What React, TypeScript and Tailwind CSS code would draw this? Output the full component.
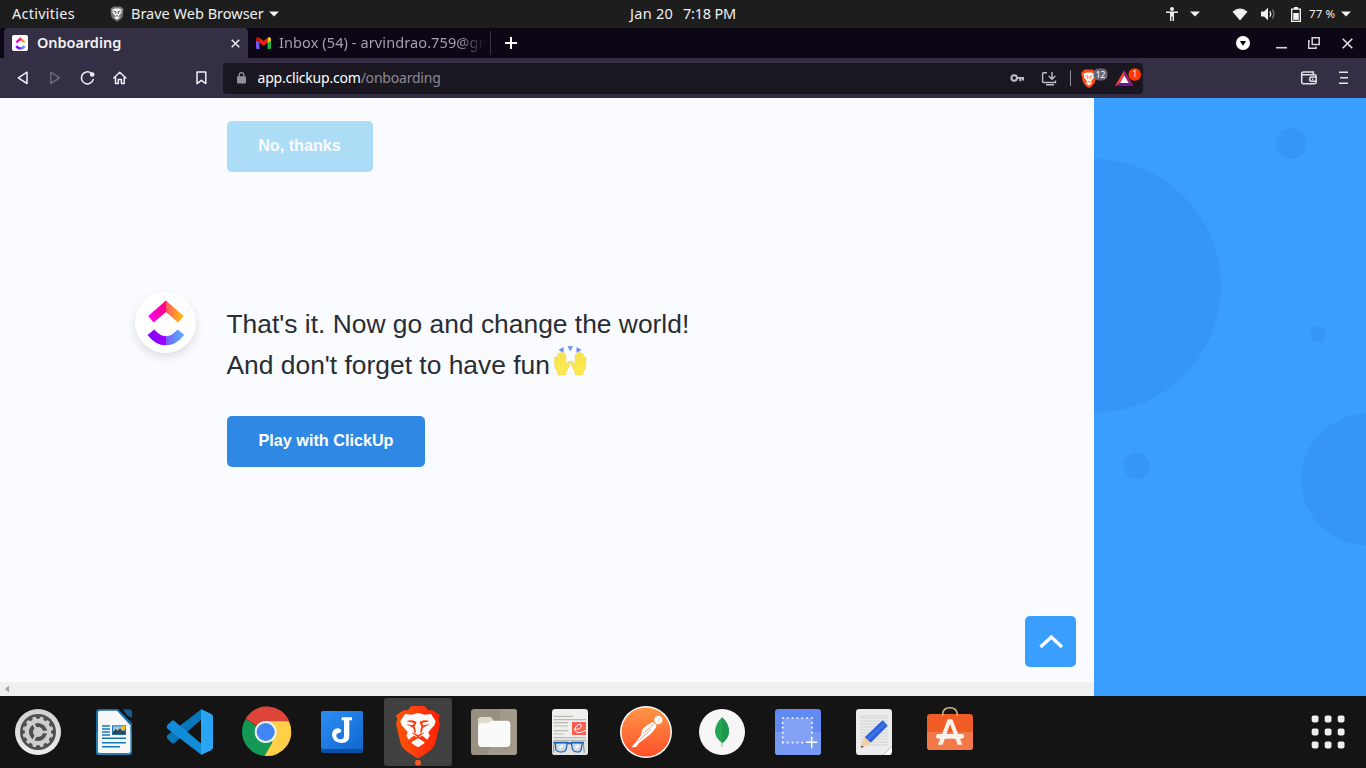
import React from "react";

const Caret = () => (
  <svg width="10" height="6" viewBox="0 0 10 6" className="shrink-0"><path d="M0 0.5H10L5 5.5Z" fill="#f2f2f2" /></svg>
);

function TopBar() {
  return (
    <div className="flex h-7 items-center bg-[#1d1d1d] text-[14.5px] text-[#f0f0f0]">
      <div className="w-[98px] shrink-0 pb-px pl-3 tracking-[0.25px] whitespace-nowrap">Activities</div>
      <div className="flex w-[532px] shrink-0 items-center pl-3">
        <svg width="14" height="16" viewBox="0 0 14 16" className="mr-[7px] shrink-0">
          <path d="M3.6 0.5H10.4L13.6 3L12.7 10.5Q11.5 13.5 7 15.8Q2.5 13.5 1.3 10.5L0.4 3Z" fill="#777" />
          <path d="M2.3 3.5L5 2.5H9L11.7 3.5L11.2 7L9 9.5L9.5 12L7 13.5L4.5 12L5 9.5L2.8 7Z" fill="#f4f4f4" />
          <path d="M3.5 5L6 5.8L5.6 8M10.5 5L8 5.8L8.4 8M5.4 10.5L7 9.5L8.6 10.5" stroke="#555" strokeWidth="1" fill="none" />
        </svg>
        <span className="w-[138px] pb-px whitespace-nowrap">Brave Web Browser</span>
        <Caret />
      </div>
      <div className="flex w-[536px] shrink-0 gap-[8px] pb-px whitespace-nowrap"><span className="w-[45px] tracking-[0.3px]">Jan 20</span><span className="tracking-[-0.2px]">7:18 PM</span></div>
      <svg width="12" height="14" viewBox="0 0 12 14" className="shrink-0"><circle cx="6" cy="2" r="2" fill="#eee" /><path d="M0 4.5H12V6H8V14H6.6V9.5H5.4V14H4V6H0Z" fill="#eee" /></svg>
      <div className="w-3" />
      <Caret />
      <div className="w-8" />
      <svg width="16" height="13" viewBox="0 0 16 13" className="shrink-0"><path d="M0.5 3.7Q8-2.5 15.5 3.7L8 12.5Z" fill="#f2f2f2" /></svg>
      <svg width="15" height="14" viewBox="0 0 15 14" className="ml-[13px] shrink-0"><path d="M0 4.5H3L7 0.8V13.2L3 9.5H0Z" fill="#f2f2f2" /><path d="M8.7 4.3Q10.7 7 8.7 9.7" fill="none" stroke="#f2f2f2" strokeWidth="1.3" /><path d="M11 2.5Q15 7 11 11.5" fill="none" stroke="#777" strokeWidth="1.2" /></svg>
      <svg width="10" height="15" viewBox="0 0 10 15" className="ml-[15px] shrink-0"><path d="M3 0H7V1.5H10V15H0V1.5H3Z" fill="#f2f2f2" /><path d="M1.3 2.8H8.7V13.7H1.3Z" fill="#1d1d1d" /><path d="M2.2 6H7.8V12.8H2.2Z" fill="#f2f2f2" /></svg>
      <span className="ml-2 w-[32px] shrink-0 text-[11.5px] tracking-[0.15px] whitespace-nowrap">77 %</span>
      <Caret />
    </div>
  );
}

function ClickUpMark({ className, id }: { className: string; id: string }) {
  return (
    <svg viewBox="0 0 38 46" className={className}>
      <defs>
        <linearGradient id={id + "t"}><stop stopColor="#f0f" /><stop offset=".48" stopColor="#ff0083" /><stop offset=".52" stopColor="#ff5b60" /><stop offset="1" stopColor="#ffc800" /></linearGradient>
        <linearGradient id={id + "b"}><stop stopColor="#8700ff" /><stop offset=".49" stopColor="#9b00ff" /><stop offset=".51" stopColor="#7660fb" /><stop offset="1" stopColor="#53b4ff" /></linearGradient>
      </defs>
      <path d="M1.2 16L18.9 0.5L36.7 16L31.3 22.5L18.9 12L6.7 22.5Z" fill={`url(#${id}t)`} />
      <path d="M0.5 35L7.3 29.5Q18.9 43 30.6 29.5L37.3 35Q29 45.3 18.9 45.3Q8.5 45.3 0.5 35Z" fill={`url(#${id}b)`} />
    </svg>
  );
}

function TabStrip() {
  return (
    <div className="flex h-[30px] items-center bg-[#0d0715] pl-1 text-[#f3f2f5]">
      <div className="flex h-full w-[244px] shrink-0 items-center rounded-t-[4px] bg-[#342f44] pl-2">
        <span className="flex size-4 items-center justify-center rounded-[2px] bg-white"><ClickUpMark className="h-[13px] w-[11px]" id="fav" /></span>
        <span className="ml-[9px] w-[194px] pb-px text-[14.5px] font-semibold tracking-[-0.05px]">Onboarding</span>
        <svg width="9" height="9" viewBox="0 0 9 9"><path d="M0.7 0.7L8.3 8.3M8.3 0.7L0.7 8.3" stroke="#eee" strokeWidth="1.5" /></svg>
      </div>
      <svg width="15" height="12" viewBox="0 0 15 12" className="ml-2 shrink-0">
        <path d="M0 2L3.4 4.5V12H1Q0 12 0 11Z" fill="#7657f5" />
        <path d="M11.6 4.5L15 2V11Q15 12 14 12H11.6Z" fill="#19b84b" />
        <path d="M0 1.7Q1.3-0.8 3.2 0.8L7.5 4L11.6 0.9V5.2L7.5 8.7L3.4 5.5L0 3.5Z" fill="#f32212" />
        <path d="M0 1.7Q1.3-0.8 3.4 0.9V5.5L0 3.5Z" fill="#b3120c" />
        <path d="M11.6 0.9Q14-1 15 1.7V3.5L11.6 6Z" fill="#ffc40e" />
      </svg>
      <span className="ml-2 w-[211px] shrink-0 bg-linear-to-r from-[#aaa6b0] from-85% to-[#0d0715] to-98% bg-clip-text pb-px text-[14.5px] tracking-[0.1px] whitespace-nowrap text-transparent">Inbox (54) - arvindrao.759@gm</span>
      <div className="h-6 w-px bg-[#3a3641]" />
      <svg width="12" height="12" viewBox="0 0 12 12" className="ml-[14px] shrink-0"><path d="M6 0V12M0 6H12" stroke="#fff" strokeWidth="2" /></svg>
      <svg width="14" height="14" viewBox="0 0 14 14" className="ml-[719px] shrink-0"><circle cx="7" cy="7" r="7" fill="#fff" /><path d="M3.8 5H10.2L7 9.8Z" fill="#0d0715" /></svg>
      <svg width="11" height="12" viewBox="0 0 11 12" className="ml-[26px] shrink-0"><path d="M0 10.7H11" stroke="#d7d5da" strokeWidth="1.6" /></svg>
      <svg width="12" height="12" viewBox="0 0 12 12" className="ml-[21px] shrink-0"><path d="M4.2 0.8H11.2V7.5H4.2ZM2 4H0.7V11.2H8V9.5" fill="none" stroke="#d7d5da" strokeWidth="1.5" /></svg>
      <svg width="11" height="11" viewBox="0 0 11 11" className="ml-[22px] shrink-0"><path d="M0.7 0.7L10.3 10.3M10.3 0.7L0.7 10.3" stroke="#e7e5e9" strokeWidth="1.5" /></svg>
    </div>
  );
}

function Toolbar() {
  return (
    <div className="flex h-10 items-center bg-[#342f44]">
      <svg width="223" height="40" viewBox="0 0 223 40" className="shrink-0" fill="none" stroke="#f1eff4" strokeWidth="1.5" strokeLinejoin="round" strokeLinecap="round">
        <path d="M27 14.2V25.5L18.3 19.8Z" />
        <path d="M50.8 14.2V25.5L59.5 19.8Z" stroke="#6e697b" />
        <path d="M91.2 15.2A6 6 0 1 0 93.2 21.5" /><circle cx="92.2" cy="16.5" r="1.6" fill="#f1eff4" />
        <path d="M113.8 20L119.8 14.3L125.8 20M115.5 19V25.5H118.3V21.5H121.4V25.5H124.2V19" />
        <path d="M197 14H205.8V25.6L201.4 22.3L197 25.6Z" />
      </svg>
      <div className="flex h-[31px] w-[920px] shrink-0 items-center rounded-[4px] bg-[#1a1720]">
        <svg width="9" height="12" viewBox="0 0 9 12" className="ml-[14px] shrink-0"><path d="M2.2 5V3A2.3 2.3 0 0 1 6.8 3V5" fill="none" stroke="#92919a" strokeWidth="1.3" /><rect y="4.2" width="9" height="7.3" rx="1" fill="#92919a" /></svg>
        <div className="ml-[11.5px] w-[751.5px] shrink-0 pb-0.5 text-[14px] tracking-[-0.21px] whitespace-nowrap text-white">app.clickup.com<span className="text-[#8c8a92]">/onboarding</span></div>
        <svg width="134" height="31" viewBox="0 0 134 31" className="shrink-0 font-['Noto_Sans',sans-serif]">
          <g fill="none" stroke="#bebcc2" strokeWidth="2"><circle cx="5.2" cy="15" r="2.8" /><path d="M8 15H15M11.3 15V18.3M14 15V17.5" /></g>
          <g fill="none" stroke="#bebcc2" strokeWidth="1.4"><path d="M38 9.8H34.5Q33.6 9.8 33.6 11V18.5Q33.6 19.5 34.5 19.5H46.5V17.5M37 21.8H45M43 9V16M39.7 13L43 16.3L46.3 13" /></g>
          <path d="M61.5 7.5V23" stroke="#928f99" />
          <path d="M75.5 6.5H83.5L88 10L86.3 18Q85 22.5 80 25Q75 22.5 73.7 18L72 10Z" fill="#fb4a13" />
          <path d="M74.5 10.5L78 9.5H82L85.5 10.5L84.7 15L82.2 18L82.8 20.5L80 22.5L77.2 20.5L77.8 18L75.3 15Z" fill="#fff" />
          <path d="M76.5 12.7L79 13.3L78.7 16M83.5 12.7L81 13.3L81.3 16M78.3 19.5L80 18.5L81.7 19.5" fill="none" stroke="#fb4a13" strokeWidth="0.8" />
          <rect x="84.5" y="5.5" width="14" height="12" rx="5" fill="#686477" /><text x="91.5" y="14.5" textAnchor="middle" fill="#fff" fontSize="8.5">12</text>
          <path d="M115.3 7.5L106 23H124.5Z" fill="#6e1898" /><path d="M115.3 7.5L106 23L110.5 20L115.3 12Z" fill="#ff4724" /><path d="M115.3 7.5L124.5 23L120.2 20L115.3 12Z" fill="#9e1f63" /><path d="M115.3 12.5L111 20H119.7Z" fill="#fff" />
          <rect x="119.5" y="5.2" width="12.5" height="12.5" rx="6" fill="#ff3b00" /><text x="125.8" y="14.2" textAnchor="middle" fill="#fff" fontSize="8">1</text>
        </svg>
      </div>
      <svg width="223" height="40" viewBox="0 0 223 40" className="shrink-0" fill="none" stroke="#e3e1e7" strokeWidth="1.5">
        <path d="M160 25.7H171.5Q173.2 25.7 173.2 24V18.2Q173.2 16.7 171.5 16.7H160Q158.7 16.7 158.7 15.3Q158.7 14 160.5 14H170.3V16.7M158.7 15.3V24Q158.7 25.7 160 25.7M173.2 19H168.7Q166.7 19 166.7 21.2Q166.7 23.3 168.7 23.3H173.2M169 21.2H170.2" />
        <path d="M196 14.2H205M197 19.7H205M196 25.2H205" />
      </svg>
    </div>
  );
}

function RaisedHands() {
  return (
    <svg width="36" height="32" viewBox="0 0 36 32" className="shrink-0">
      <path d="M10.5 2V8L5.5 5ZM14.5 1.2H20L17.3 6.2ZM23.5 2V8L28.5 5Z" fill="#6890fa" />
      <g fill="#fce94f" stroke="#e9cd44" strokeWidth="0.5" transform="translate(0.5 0)">
        <path d="M1 13.5Q1 11.8 2.3 11.8Q3.5 11.8 3.6 14L4 10Q4 8.3 5.3 8.3Q6.8 8.3 6.8 10V8.5Q7 7 8.2 7Q9.5 7 9.6 8.5V10Q9.8 8.8 11 8.8Q12.3 8.8 12.3 10.5V20L14.5 16.8Q16 15.5 16.8 16.7Q17.2 17.4 16 20L12.8 26.5Q12.3 28 12.3 30H4.3Q4.5 27 2.5 24Q1 21 1 17Z" />
        <path d="M32.5 13.5Q32.5 11.8 31.2 11.8Q30.2 11.8 30.1 14L29.8 10Q29.8 8.3 28.5 8.3Q27.1 8.3 27.1 10V8.5Q27 7 25.8 7Q24.5 7 24.4 8.5V10Q24.2 8.8 23 8.8Q21.7 8.8 21.7 10.5V20L19.5 16.8Q18 15.5 17.2 16.7Q16.8 17.4 18 20L21.2 26.5Q21.7 28 21.7 30H29.4Q29.3 27 31.2 24Q32.5 21 32.5 17Z" />
        <path d="M3.6 14V18M6.8 10V17M9.6 10V17M30.1 14V18M27.1 10V17M24.4 10V17" />
      </g>
    </svg>
  );
}

function Page() {
  return (
    <div className="flex h-[598px] font-['Liberation_Sans',sans-serif]">
      <main className="flex w-[1094px] shrink-0 flex-col bg-[#fafbfe]">
        <div className="flex h-[518px] pt-[23px] pl-[135px]">
          <div className="w-[92px] shrink-0 pt-[171px]">
            <div className="flex size-[61px] items-center justify-center rounded-full bg-white shadow-[0_4px_10px_rgba(0,0,0,0.12)]"><ClickUpMark className="h-[46px] w-[38px]" id="logo" /></div>
          </div>
          <div>
            <button className="flex h-[51px] w-[146px] items-center justify-center rounded-[5px] bg-[#addcf6] pr-px pb-[3px] text-[16.2px] font-bold whitespace-nowrap text-[#f9fbfe]">No, thanks</button>
            <div className="mt-[132px] text-[26.4px] leading-[41px] whitespace-nowrap text-[#292d34]">
              <p className="-ml-[0.5px]">That's it. Now go and change the world!</p>
              <div className="-ml-[0.5px] flex h-[41px] items-start"><span className="mr-[3px]">And don't forget to have fun</span><RaisedHands /></div>
            </div>
            <button className="mt-[30px] flex h-[51px] w-[198px] items-center justify-center rounded-[5px] bg-[#3088e5] pb-[3px] text-[16.2px] font-bold whitespace-nowrap text-white">Play with ClickUp</button>
          </div>
        </div>
        <div className="flex h-[66px] justify-end pr-[18px]">
          <button className="flex size-[51px] items-center justify-center rounded-[5px] bg-[#3a9eff]"><svg width="26" height="16" viewBox="0 0 26 16"><path d="M2.5 13L13.3 3L24 13" fill="none" stroke="#fff" strokeWidth="3.4" /></svg></button>
        </div>
        <div className="flex h-[14px] items-center bg-[#f0f0f0] pl-[5px]"><svg width="4" height="8" viewBox="0 0 4 8"><path d="M4 0.5V7.5L0 4Z" fill="#a3a3a3" /></svg></div>
      </main>
      <aside className="w-[272px] bg-[#3a9eff]">
        <svg width="272" height="598" viewBox="0 0 272 598" fill="#3695f9"><circle cx="0" cy="188" r="127" /><circle cx="197" cy="45.5" r="15.5" /><circle cx="224.5" cy="236" r="8" /><circle cx="42.5" cy="368" r="13" /><circle cx="272.5" cy="381.5" r="65.5" /></svg>
      </aside>
    </div>
  );
}

const teeth = Array.from({ length: 12 }, (_, i) => i * 30);
const rows = [60, 66, 75, 84, 93, 102, 111, 120, 129, 138, 147];

const icons: React.ReactNode[] = [
  <>
    <circle cx="114" cy="108" r="69" fill="url(#silver)" /><circle cx="114" cy="108" r="54" fill="#505050" />
    {teeth.map((a) => <path key={a} d="M107 72L109 62H119L121 72Z" fill="#cecece" transform={`rotate(${a + 15} 114 108)`} />)}
    <circle cx="114" cy="108" r="33" fill="none" stroke="#cecece" strokeWidth="13" />
    <circle cx="114" cy="108" r="21" fill="none" stroke="#505050" strokeWidth="11" />
    <circle cx="114" cy="108" r="15" fill="#ccc" />
    <path d="M114 108L97 78M114 108L97 138M114 108H149" stroke="#ccc" strokeWidth="7" />
  </>,
  <>
    <path d="M70 39H126L168 82V166Q168 177 158 177H70Q60 177 60 167V49Q60 39 70 39Z" fill="#166ca7" /><path d="M60 108H168V166Q168 177 158 177H70Q60 177 60 167Z" fill="#2580b3" />
    <path d="M71 44H123L163 88V166Q163 171 158 171H71Q66 171 66 166V49Q66 44 71 44Z" fill="#f7f7f7" />
    <path d="M141 40H158Q168 40 168 50V66Q149 59 141 40Z" fill="#125e91" />
    <path d="M78 90H102M78 99H102M78 108H102M78 117H102M78 127H150M78 140H150M78 152H132" stroke="#1379ba" strokeWidth="4.5" />
    <path d="M108 88H150V117H108Z" fill="#1871a8" /><path d="M111 91H147V114H111Z" fill="#98c5e4" /><circle cx="143" cy="95" r="6" fill="#f2c316" /><path d="M111 114V108L119 99L125 104L132 97L140 106L144 102L147 106V114Z" fill="#3b444a" />
  </>,
  <>
    <path d="M46 128L60 142Q63 144 67 141L149 70V39L145 42L46 118Q43 123 46 128Z" fill="#0877b9" />
    <path d="M46 87L60 74Q63 71 67 75L149 144V177L144 173L46 98Q42 92 46 87Z" fill="#108cd8" />
    <path d="M147 39L178 54Q183 57 183 63V154Q183 160 177 163L147 177Z" fill="#29a5f3" />
  </>,
  <g transform="translate(-1 0)">
    <path d="M114 108L54 68A73 73 0 0 1 184 74Z" fill="#dd4539" /><path d="M54 69A73 73 0 0 0 112 180L134 139L114 108Z" fill="#149955" /><path d="M184 76H114L134 139L111 180A73 73 0 0 0 184 76Z" fill="#ffcf47" />
    <circle cx="114" cy="108" r="33" fill="#f1f1f1" /><circle cx="114" cy="108" r="27" fill="#4285f4" />
  </g>,
  <>
    <rect x="51" y="52" width="126" height="119" rx="6" fill="#0750a5" /><rect x="51" y="45" width="126" height="114" rx="6" fill="url(#blue)" />
    <path d="M113 64H144V73H136V120Q136 141 113 141Q86 140 84 117Q85 98 102 97Q112 98 112 106Q111 110 105 111Q96 112 97 121Q100 130 109 130Q120 130 120 119V73H113Z" fill="#fff" />
  </>,
  <>
    <rect x="12" y="6" width="204" height="204" rx="9" fill="#404040" />
    <path d="M94 30H134L144 42L157 43L180 58L176 70L180 83L166 143Q162 155 152 163L122 184Q114 189 106 184L76 163Q66 155 62 143L48 83L52 70L48 58L71 43L84 42Z" fill="url(#orange)" />
    <path d="M75 54L94 56L114 51L134 56L153 54L167 76L163 88L145 108L149 119L142 131L127 119L114 125L101 119L86 131L79 119L83 108L65 88L61 76Z" fill="#fff" />
    <g fill="#ff3d10">
      <path d="M79 76Q92 69 109 77V81L104 90L108 109L104 112L99 95L78 84L98 88L102 81Z" />
      <path d="M149 76Q136 69 119 77V81L124 90L120 109L124 112L129 95L150 84L130 88L126 81Z" />
      <path d="M96 109L114 117L132 109L129 114L118 121V127L114 129L110 127V121L99 114Z" />
    </g>
    <path d="M114 127L134 139L131 143L114 154L97 143L94 139Z" fill="#fff" />
    <circle cx="114" cy="200" r="9" fill="#f05a28" />
  </>,
  <>
    <rect x="45" y="39" width="138" height="138" rx="10" fill="#989080" /><path d="M131 39H173Q183 39 183 49V167Q183 177 173 177H90L131 120Z" fill="#a19a8a" />
    <path d="M66 86V73Q66 63 76 63H102Q108 63 111 72L114 78H150V90Z" fill="#e0dccd" /><path d="M66 93Q66 82 76 82H92Q101 82 103 76Q105 74 112 74H153Q163 75 163 84V142Q163 153 152 153H77Q66 153 66 142Z" fill="#fafafa" />
  </>,
  <>
    <rect x="60" y="39" width="108" height="138" rx="10" fill="#efefef" /><path d="M60 135H168V167Q168 177 158 177H70Q60 177 60 167Z" fill="#e1e1e1" />
    <path d="M65 61H123M65 71H162M65 80H108M65 90H108M65 104H108M65 114H94M65 125H162M65 133H162" stroke="#bcb9af" strokeWidth="3.5" />
    <path d="M120 78H162V117H120Z" fill="#fb6053" /><path d="M126 99Q145 103 148 90Q147 81 137 87Q124 98 133 108Q143 113 162 103" stroke="#fff" strokeWidth="3" fill="none" />
    <path d="M64 140H108L113 143L118 140H156" stroke="#1769bd" strokeWidth="5" fill="none" /><path d="M70 141H106L103 158Q101 168 88 168Q74 168 71 160ZM118 141H151L148 160Q146 168 136 168Q124 168 121 158Z" fill="#c9d9e7" stroke="#1759a8" strokeWidth="3.5" /><path d="M83 157L92 147M131 157L140 147" stroke="#f6f8fa" strokeWidth="7" /><path d="M66 141L64 170M154 141L157 170" stroke="#6b7988" strokeWidth="2.5" />
  </>,
  <>
    <circle cx="114" cy="108" r="78" fill="#fff" /><circle cx="114" cy="108" r="73.5" fill="url(#post)" />
    <circle cx="151" cy="72" r="12.5" fill="#fff" /><path d="M151 72L158 65M151 72L155 80" stroke="#ff8b4c" strokeWidth="1.5" />
    <path d="M104 99Q121 82 136 79L146 87Q144 98 128 114L93 141L84 153L70 154L84 138L98 119Z" fill="#fff" />
    <path d="M104 113L139 84M91 136L129 99" stroke="#fc7141" strokeWidth="2" />
  </>,
  <>
    <circle cx="114" cy="108" r="69" fill="#f6f6f6" /><path d="M114 132V153" stroke="#9da29c" strokeWidth="3" /><path d="M114 64Q135 83 135 107Q134 126 115 141Q94 126 93 107Q94 83 114 64Z" fill="#23a553" /><path d="M114 64Q135 83 135 107Q134 126 115 141Z" fill="#1c964c" />
  </>,
  <>
    <rect x="45" y="39" width="138" height="138" rx="10" fill="#6089f2" /><path d="M45 108H183V167Q183 177 173 177H55Q45 177 45 167Z" fill="#769af4" /><path d="M68 66H156V140H68Z" fill="#83a2f5" />
    <path d="M66 66H160" stroke="#fff" strokeWidth="5" strokeDasharray="5 9.6" /><path d="M66 140H139" stroke="#fff" strokeWidth="5" strokeDasharray="5 9.6" /><path d="M68 78V140M156 78V120" stroke="#fff" strokeWidth="5" strokeDasharray="5 9.6" /><path d="M138 139H172M155 122V157" stroke="#fff" strokeWidth="4.5" />
  </>,
  <>
    <path d="M70 39H158Q168 39 168 49V150L142 177H70Q60 177 60 167V49Q60 39 70 39Z" fill="#ececec" /><path d="M142 177L168 150V167Q168 177 158 177Z" fill="#fbfbfb" />
    {rows.map((y) => <path key={y} d={`M72 ${y}H156`} stroke="#cdcdcd" strokeWidth="2.5" />)}
    <path d="M140 73L155 89L104 140L86 124Z" fill="#2b61db" /><path d="M145 79L150 84L98 134L91 128Z" fill="#4070e3" /><path d="M86 124L82 130L76 151L78 156L98 145L104 140Z" fill="#f6cf9e" /><path d="M77 149L74 156L83 152Z" fill="#292b30" />
  </>,
  <>
    <rect x="45" y="54" width="138" height="108" rx="10" fill="#f15d27" /><path d="M45 108H183V152Q183 162 173 162H55Q45 162 45 152Z" fill="#f37949" />
    <path d="M92 59V55Q93 35 114 35Q134 35 136 55V59" fill="none" stroke="#dfbc87" strokeWidth="4.5" />
    <path d="M107 70H121L151 146H137L114 84L92 146H78Z" fill="#fff2eb" /><rect x="72" y="114" width="84" height="14" rx="7" fill="#fff2eb" />
  </>,
];

function Dock() {
  return (
    <div className="flex h-[72px] items-center bg-[#141414]">
      <svg width="0" height="0"><defs>
        <linearGradient id="silver" x2="0" y2="1"><stop stopColor="#d0d0d0" /><stop offset="1" stopColor="#ededed" /></linearGradient>
        <linearGradient id="blue" x2="1" y2="1"><stop stopColor="#2c8ef5" /><stop offset="1" stopColor="#1168ce" /></linearGradient>
        <linearGradient id="orange"><stop stopColor="#ff5500" /><stop offset=".5" stopColor="#ff3d10" /><stop offset="1" stopColor="#ff2000" /></linearGradient>
        <linearGradient id="post" x2="0" y2="1"><stop stopColor="#ff9546" /><stop offset="1" stopColor="#ff5029" /></linearGradient>
      </defs></svg>
      {icons.map((icon, i) => <svg key={i} width="76" height="72" viewBox="0 0 228 216" className="shrink-0">{icon}</svg>)}
      <svg width="36" height="36" viewBox="0 0 36 36" className="ml-[322px] shrink-0" fill="#eeeeec">
        {teeth.slice(0, 9).map((_, i) => <rect key={i} x={1.7 + (i % 3) * 13} y={1.4 + Math.floor(i / 3) * 13} width="6.8" height="7" rx="1.8" />)}
      </svg>
    </div>
  );
}

export default function App() {
  return (
    <div className="h-[768px] w-[1366px] overflow-hidden font-['Noto_Sans',sans-serif]">
      <TopBar />
      <TabStrip />
      <Toolbar />
      <Page />
      <Dock />
    </div>
  );
}
